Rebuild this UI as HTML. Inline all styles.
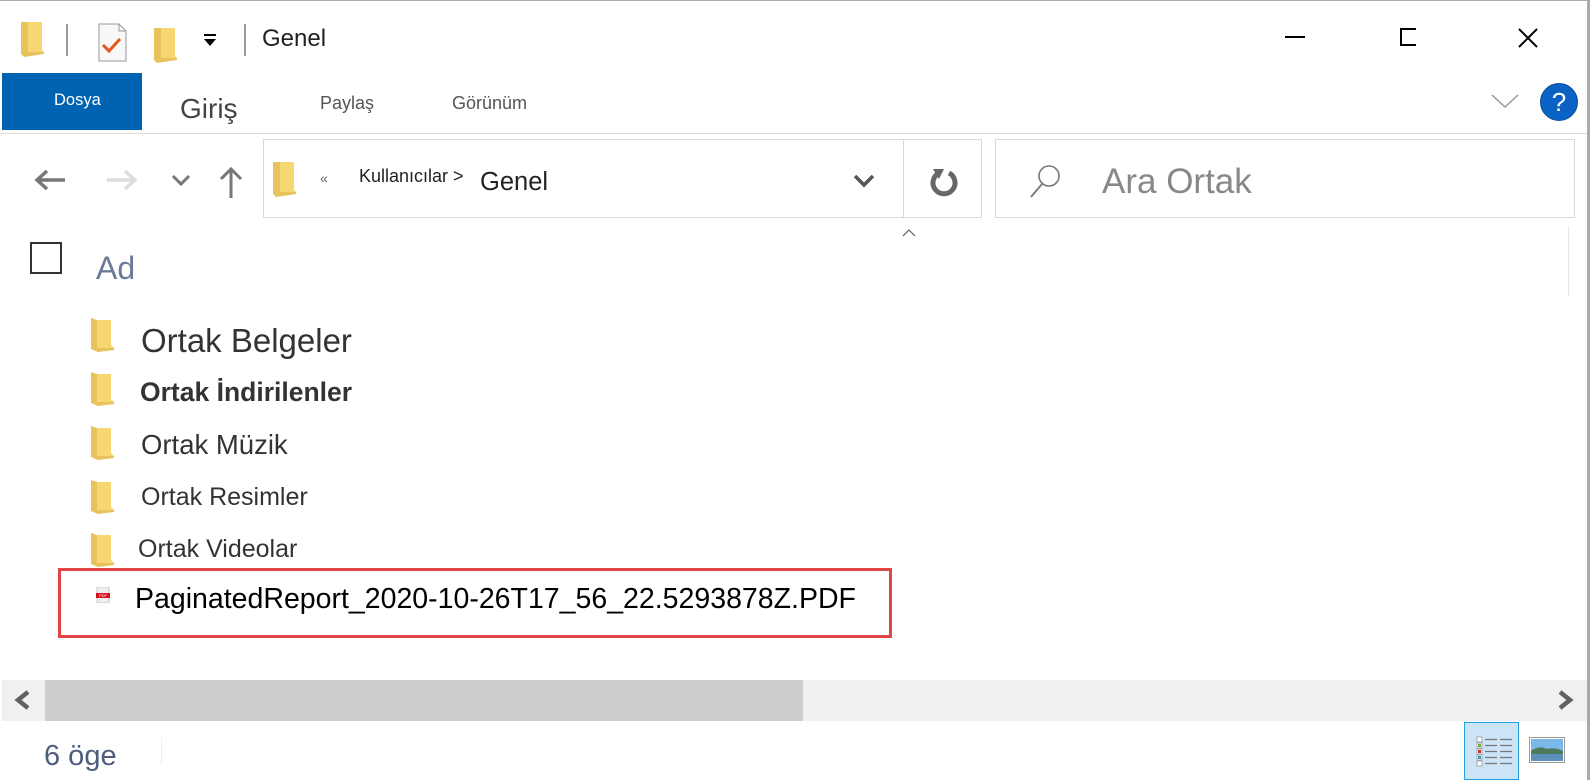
<!DOCTYPE html>
<html><head><meta charset="utf-8"><style>
*{margin:0;padding:0;box-sizing:border-box}
body{width:1590px;height:780px;background:#fff;position:relative;overflow:hidden;font-family:"Liberation Sans",Arial,sans-serif}
.a{position:absolute;white-space:nowrap}
.folder{position:absolute;width:24px;height:34px}
</style></head><body>
<div class="a" style="left:0;top:0;width:1590px;height:1px;background:#aaa"></div>
<div class="a" style="left:1587px;top:0;width:3px;height:780px;background:#aaa"></div>

<svg class="a" style="left:20px;top:20px" width="26" height="38" viewBox="0 0 26 38"><path d="M1 2 L8 2 L8 32 L24 32 L24 34 L4 37 L1 34Z" fill="#e8c25a"/><path d="M8 2 L22 2 L22 30 L24 32 L8 32Z" fill="#f7d774"/></svg>
<div class="a" style="left:66px;top:24px;width:2px;height:32px;background:#999"></div>
<svg class="a" style="left:98px;top:23px" width="30" height="40" viewBox="0 0 30 40"><path d="M1 1 H21 L28 8 V38 H1Z" fill="#f8f8f8" stroke="#999"/><path d="M21 1 V8 H28" fill="none" stroke="#999"/><path d="M5 22 L11 28 L22 16" fill="none" stroke="#e4551e" stroke-width="3"/></svg>
<svg class="a" style="left:153px;top:26px" width="26" height="38" viewBox="0 0 26 38"><path d="M1 2 L8 2 L8 32 L24 32 L24 34 L4 37 L1 34Z" fill="#e8c25a"/><path d="M8 2 L22 2 L22 30 L24 32 L8 32Z" fill="#f7d774"/></svg>
<svg class="a" style="left:203px;top:34px" width="14" height="14" viewBox="0 0 14 14"><rect x="1" y="0" width="12" height="2" fill="#000"/><path d="M1 5 H13 L7 12Z" fill="#000"/></svg>
<div class="a" style="left:244px;top:24px;width:2px;height:32px;background:#999"></div>
<div class="a" style="left:262px;top:25px;font-size:24px;color:#222">Genel</div>
<div class="a" style="left:1285px;top:36px;width:20px;height:2px;background:#000"></div>
<div class="a" style="left:1400px;top:28px;width:16px;height:18px;border:2px solid #000;border-right:none"></div>
<svg class="a" style="left:1517px;top:27px" width="22" height="22" viewBox="0 0 22 22"><path d="M2 2 L20 20 M20 2 L2 20" stroke="#000" stroke-width="2"/></svg>

<div class="a" style="left:2px;top:73px;width:140px;height:57px;background:#0063b1"></div>
<div class="a" style="left:54px;top:91px;font-size:16.5px;color:#fff">Dosya</div>
<div class="a" style="left:180px;top:93px;font-size:28px;color:#444">Giriş</div>
<div class="a" style="left:320px;top:93px;font-size:18px;color:#555">Paylaş</div>
<div class="a" style="left:452px;top:93px;font-size:18px;color:#555">Görünüm</div>
<svg class="a" style="left:1490px;top:93px" width="30" height="16" viewBox="0 0 30 16"><path d="M2 2 L15 14 L28 2" fill="none" stroke="#999" stroke-width="1.5"/></svg>
<div class="a" style="left:1540px;top:83px;width:38px;height:38px;border-radius:50%;background:#0a63c4;border:1px solid #0a4f9a;color:#fff;font-size:26px;text-align:center;line-height:36px">?</div>
<div class="a" style="left:0;top:133px;width:1587px;height:1px;background:#d9d9d9"></div>

<svg class="a" style="left:33px;top:168px" width="34" height="24" viewBox="0 0 34 24"><path d="M32 12 H5 M14 3 L4 12 L14 21" fill="none" stroke="#777" stroke-width="3.5"/></svg>
<svg class="a" style="left:105px;top:168px" width="34" height="24" viewBox="0 0 34 24"><path d="M2 12 H29 M20 3 L30 12 L20 21" fill="none" stroke="#ddd" stroke-width="3.5"/></svg>
<svg class="a" style="left:171px;top:173px" width="20" height="14" viewBox="0 0 20 14"><path d="M2 3 L10 11 L18 3" fill="none" stroke="#777" stroke-width="3"/></svg>
<svg class="a" style="left:218px;top:165px" width="26" height="34" viewBox="0 0 26 34"><path d="M13 33 V4 M3 14 L13 4 L23 14" fill="none" stroke="#777" stroke-width="3"/></svg>
<div class="a" style="left:263px;top:139px;width:719px;height:79px;border:1px solid #d9d9d9"></div>
<div class="a" style="left:903px;top:139px;width:1px;height:79px;background:#d9d9d9"></div>
<svg class="a" style="left:272px;top:160px" width="26" height="38" viewBox="0 0 26 38"><path d="M1 2 L8 2 L8 32 L24 32 L24 34 L4 37 L1 34Z" fill="#e8c25a"/><path d="M8 2 L22 2 L22 30 L24 32 L8 32Z" fill="#f7d774"/></svg>
<div class="a" style="left:320px;top:170px;font-size:14px;color:#666">«</div>
<div class="a" style="left:359px;top:166px;font-size:18px;color:#222">Kullanıcılar &gt;</div>
<div class="a" style="left:480px;top:168px;font-size:25.5px;color:#222">Genel</div>
<svg class="a" style="left:852px;top:173px" width="24" height="16" viewBox="0 0 24 16"><path d="M3 3 L12 12 L21 3" fill="none" stroke="#555" stroke-width="3.5"/></svg>
<svg class="a" style="left:930px;top:166px" width="28" height="34" viewBox="0 0 28 34"><path d="M9 7 A11 11 0 1 0 19 7" fill="none" stroke="#666" stroke-width="5"/><path d="M3 3 L14 3 L9 13Z" fill="#666"/></svg>
<div class="a" style="left:995px;top:139px;width:580px;height:79px;border:1px solid #d9d9d9"></div>
<svg class="a" style="left:1028px;top:163px" width="34" height="36" viewBox="0 0 34 36"><circle cx="21" cy="13" r="10" fill="none" stroke="#777" stroke-width="1.6"/><path d="M14 21 L3 34" stroke="#777" stroke-width="1.8"/></svg>
<div class="a" style="left:1102px;top:162px;font-size:35px;color:#888">Ara Ortak</div>

<svg class="a" style="left:902px;top:228px" width="14" height="10" viewBox="0 0 14 10"><path d="M1 8 L7 2 L13 8" fill="none" stroke="#555" stroke-width="1"/></svg>
<div class="a" style="left:1568px;top:226px;width:1px;height:70px;background:#e6e6e6"></div>
<div class="a" style="left:30px;top:242px;width:32px;height:32px;border:2px solid #333"></div>
<div class="a" style="left:96px;top:250px;font-size:32px;color:#6b7a99">Ad</div>

<svg class="folder" style="left:91px;top:318px" viewBox="0 0 24 34"><path d="M0 0 L6 2 L6 30 L23 30 L23 32 L7 34 L0 31Z" fill="#e8c25a"/><path d="M6 2 L20 2 L20 27 L23 30 L6 30Z" fill="#f7d774"/></svg>
<div class="a" style="left:141px;top:322px;font-size:33px;color:#333">Ortak Belgeler</div>
<svg class="folder" style="left:91px;top:372px" viewBox="0 0 24 34"><path d="M0 0 L6 2 L6 30 L23 30 L23 32 L7 34 L0 31Z" fill="#e8c25a"/><path d="M6 2 L20 2 L20 27 L23 30 L6 30Z" fill="#f7d774"/></svg>
<div class="a" style="left:140px;top:377px;font-size:26.5px;color:#333;font-weight:bold">Ortak İndirilenler</div>
<svg class="folder" style="left:91px;top:426px" viewBox="0 0 24 34"><path d="M0 0 L6 2 L6 30 L23 30 L23 32 L7 34 L0 31Z" fill="#e8c25a"/><path d="M6 2 L20 2 L20 27 L23 30 L6 30Z" fill="#f7d774"/></svg>
<div class="a" style="left:141px;top:429px;font-size:27.5px;color:#333">Ortak Müzik</div>
<svg class="folder" style="left:91px;top:480px" viewBox="0 0 24 34"><path d="M0 0 L6 2 L6 30 L23 30 L23 32 L7 34 L0 31Z" fill="#e8c25a"/><path d="M6 2 L20 2 L20 27 L23 30 L6 30Z" fill="#f7d774"/></svg>
<div class="a" style="left:141px;top:483px;font-size:25px;color:#333">Ortak Resimler</div>
<svg class="folder" style="left:91px;top:533px" viewBox="0 0 24 34"><path d="M0 0 L6 2 L6 30 L23 30 L23 32 L7 34 L0 31Z" fill="#e8c25a"/><path d="M6 2 L20 2 L20 27 L23 30 L6 30Z" fill="#f7d774"/></svg>
<div class="a" style="left:138px;top:535px;font-size:25px;color:#333">Ortak Videolar</div>

<div class="a" style="left:58px;top:568px;width:834px;height:70px;border:3px solid #e04646"></div>
<svg class="a" style="left:96px;top:587px" width="14" height="16" viewBox="0 0 14 16"><rect x="1" y="0" width="12" height="16" fill="#eee" stroke="#bbb" stroke-width="0.8"/><rect x="0" y="6" width="14" height="5" fill="#d7131f"/><text x="7" y="10" font-size="4" fill="#fff" text-anchor="middle" font-family="Liberation Sans">PDF</text></svg>
<div class="a" style="left:135px;top:583px;font-size:28.5px;color:#000">PaginatedReport_2020-10-26T17_56_22.5293878Z.PDF</div>

<div class="a" style="left:2px;top:680px;width:1585px;height:41px;background:#f0f0f0"></div>
<div class="a" style="left:45px;top:680px;width:758px;height:41px;background:#cdcdcd"></div>
<svg class="a" style="left:13px;top:690px" width="18" height="20" viewBox="0 0 18 20"><path d="M15 2 L5 10 L15 18" fill="none" stroke="#606060" stroke-width="4.5"/></svg>
<svg class="a" style="left:1557px;top:690px" width="18" height="20" viewBox="0 0 18 20"><path d="M3 2 L13 10 L3 18" fill="none" stroke="#606060" stroke-width="4.5"/></svg>

<div class="a" style="left:44px;top:740px;font-size:29px;color:#4e5d7d">6 öge</div>
<div class="a" style="left:161px;top:737px;width:1px;height:28px;background:#eee"></div>
<div class="a" style="left:1464px;top:722px;width:55px;height:58px;background:#cce4f7;border:1px solid #26a0da"></div>
<svg class="a" style="left:1476px;top:736px" width="38" height="32" viewBox="0 0 38 32"><g fill="#fff" stroke="#999" stroke-width="0.8"><rect x="1" y="1" width="5" height="5"/><rect x="1" y="7" width="5" height="5"/><rect x="1" y="13" width="5" height="5"/><rect x="1" y="19" width="5" height="5"/><rect x="1" y="25" width="5" height="5"/></g><rect x="2" y="14" width="3" height="3" fill="#c33"/><rect x="2" y="8" width="3" height="3" fill="#7a4"/><rect x="2" y="20" width="3" height="3" fill="#49a"/><g stroke="#777" stroke-width="1.2"><path d="M9 3.5H21M24 3.5H36M9 9.5H21M24 9.5H36M9 15.5H21M24 15.5H36M9 21.5H21M24 21.5H36M9 27.5H21M24 27.5H36"/></g></svg>
<svg class="a" style="left:1529px;top:737px" width="36" height="26" viewBox="0 0 36 26"><rect x="0.5" y="0.5" width="35" height="25" fill="#fff" stroke="#999"/><rect x="2" y="2" width="32" height="22" fill="#7bb8e8"/><path d="M2 14 Q10 8 18 12 Q26 10 34 14 V24 H2Z" fill="#4c7a5a"/><rect x="2" y="17" width="32" height="7" fill="#5d8fb8"/></svg>
</body></html>
